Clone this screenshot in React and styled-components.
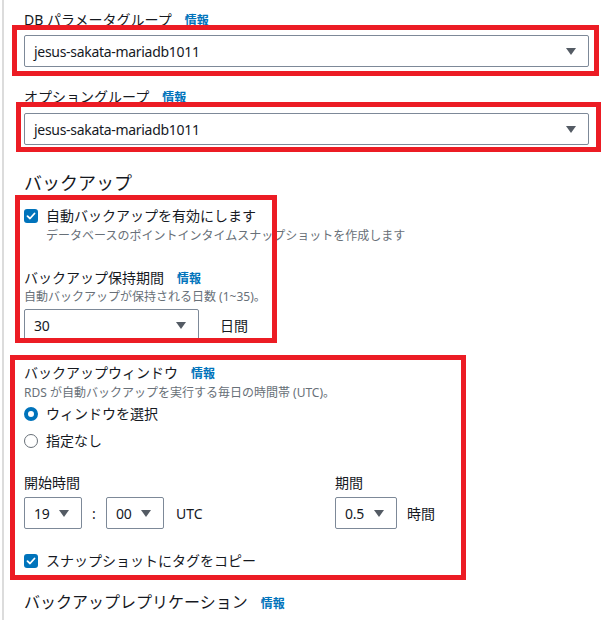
import styled, { createGlobalStyle } from "styled-components";

const GlobalStyle = createGlobalStyle`
  html, body {
    margin: 0;
    background: #fff;
  }
  body {
    font-family: "Noto Sans", "Noto Sans CJK JP", sans-serif;
    font-size: 14px;
    color: #16191f;
  }
`;

const Page = styled.div`
  box-sizing: border-box;
  min-height: 620px;
  margin-left: 2px;
  border-left: 2px solid #dcdcdc;
  padding: 10px 14px 0 20px;
  overflow: hidden;
`;

const Label = styled.div`
  display: flex;
  align-items: baseline;
  height: 20px;
  line-height: 20px;
  font-size: 14px;
  margin-top: ${(p) => p.$gap || 0}px;
`;

const Info = styled.a`
  margin-left: 13px;
  font-size: 12px;
  font-weight: 700;
  color: #0073bb;
  text-decoration: none;
`;

const Hint = styled.div`
  font-size: 12px;
  line-height: 16px;
  color: #687078;
  margin-top: ${(p) => p.$gap || 0}px;
  padding-left: ${(p) => p.$indent || 0}px;
`;

const Heading = styled.h2`
  margin: 26px 0 0;
  font-size: 18px;
  line-height: 24px;
  font-weight: 400;
`;

const SubHeading = styled.h3`
  display: flex;
  align-items: baseline;
  margin: 20px 0 0;
  font-size: 16px;
  line-height: 22px;
  font-weight: 400;
`;

const Group = styled.div`
  position: relative;
  margin-top: ${(p) => p.$gap || 0}px;
`;

// red annotation frame drawn over a group
const Mark = styled.span`
  position: absolute;
  top: ${(p) => p.$top}px;
  left: ${(p) => p.$left}px;
  width: ${(p) => p.$w}px;
  height: ${(p) => p.$h}px;
  box-sizing: border-box;
  border: 5px solid #ec1c24;
  pointer-events: none;
  z-index: 2;
`;

const SelectBox = styled.div`
  display: flex;
  align-items: center;
  box-sizing: border-box;
  width: ${(p) => (p.$width ? `${p.$width}px` : "100%")};
  height: 32px;
  padding: 0 12px 0 9px;
  border: 1px solid #7d8998;
  border-radius: 2px;
  background: #fff;
  font-size: 14px;
  letter-spacing: -0.3px;
  white-space: nowrap;
`;

const Caret = styled.span`
  margin-left: auto;
  width: 0;
  height: 0;
  border-left: 5px solid transparent;
  border-right: 5px solid transparent;
  border-top: 7px solid #545b64;
`;

const Row = styled.div`
  display: flex;
  align-items: center;
  gap: ${(p) => p.$gap || 0}px;
  margin-top: ${(p) => p.$top || 0}px;
`;

const CheckRow = styled.label`
  display: flex;
  align-items: center;
  gap: 8px;
  height: 20px;
  line-height: 20px;
  font-size: 14px;
  margin-top: ${(p) => p.$top || 0}px;
`;

const Box = styled.span`
  display: flex;
  align-items: center;
  justify-content: center;
  width: 14px;
  height: 14px;
  border-radius: 3px;
  background: #0073bb;
`;

const Radio = styled.span`
  box-sizing: border-box;
  width: 14px;
  height: 14px;
  border-radius: 50%;
  background: #fff;
  border: ${(p) => (p.$on ? "4px solid #0073bb" : "1.5px solid #687078")};
`;

const TimeGrid = styled.div`
  display: grid;
  grid-template-columns: 311px auto;
  margin-top: 22px;
`;

const Colon = styled.span`
  width: 4px;
  text-align: center;
`;

const Unit = styled.span`
  margin-left: ${(p) => p.$gap || 0}px;
`;

function Checkbox({ children, top }) {
  return (
    <CheckRow $top={top}>
      <Box>
        <svg width="10" height="10" viewBox="0 0 10 10">
          <polyline
            points="1.5,5.2 4,7.5 8.5,2.5"
            fill="none"
            stroke="#fff"
            strokeWidth="1.8"
            strokeLinecap="round"
            strokeLinejoin="round"
          />
        </svg>
      </Box>
      {children}
    </CheckRow>
  );
}

function Select({ value, width }) {
  return (
    <SelectBox $width={width}>
      {value}
      <Caret />
    </SelectBox>
  );
}

export default function App() {
  return (
    <Page>
      <GlobalStyle />
      <Label>
        DB パラメータグループ<Info href="#">情報</Info>
      </Label>
      <Group $gap={5}>
        <Mark $top={-10} $left={-12} $w={587} $h={51} />
        <Select value="jesus-sakata-mariadb1011" />
      </Group>

      <Label $gap={20}>
        オプショングループ<Info href="#">情報</Info>
      </Label>
      <Group $gap={6}>
        <Mark $top={-11} $left={-8} $w={585} $h={50} />
        <Select value="jesus-sakata-mariadb1011" />
      </Group>

      <Heading>バックアップ</Heading>
      <Group $gap={11}>
        <Mark $top={-11} $left={-9} $w={262} $h={148} />
        <Checkbox>自動バックアップを有効にします</Checkbox>
        <Hint $gap={2} $indent={22}>
          データベースのポイントインタイムスナップショットを作成します
        </Hint>
        <Label $gap={24}>
          バックアップ保持期間<Info href="#">情報</Info>
        </Label>
        <Hint $gap={1}>自動バックアップが保持される日数 (1~35)。</Hint>
        <Row $top={4}>
          <Select value="30" width={175} />
          <Unit $gap={21}>日間</Unit>
        </Row>
      </Group>

      <Group $gap={22}>
        <Mark $top={-8} $left={-14} $w={456} $h={225} />
        <Label>
          バックアップウィンドウ<Info href="#">情報</Info>
        </Label>
        <Hint $gap={2}>RDS が自動バックアップを実行する毎日の時間帯 (UTC)。</Hint>
        <CheckRow $top={3}>
          <Radio $on />
          ウィンドウを選択
        </CheckRow>
        <CheckRow $top={7}>
          <Radio />
          指定なし
        </CheckRow>
        <TimeGrid>
          <div>
            <Label>開始時間</Label>
            <Row $top={4} $gap={10}>
              <Select value="19" width={58} />
              <Colon>:</Colon>
              <Select value="00" width={58} />
              <Unit $gap={2}>UTC</Unit>
            </Row>
          </div>
          <div>
            <Label>期間</Label>
            <Row $top={4}>
              <Select value="0.5" width={62} />
              <Unit $gap={10}>時間</Unit>
            </Row>
          </div>
        </TimeGrid>
        <Checkbox top={22}>スナップショットにタグをコピー</Checkbox>
      </Group>

      <SubHeading>
        バックアップレプリケーション<Info href="#">情報</Info>
      </SubHeading>
    </Page>
  );
}
